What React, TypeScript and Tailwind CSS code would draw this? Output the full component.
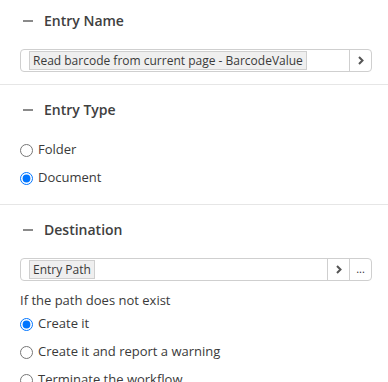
import { useState } from "react";

function Chevron() {
  return (
    <svg width="8" height="9" viewBox="0 0 8 9" fill="none">
      <path d="M2 1 L5.5 4.5 L2 8" stroke="#555" strokeWidth="2" />
    </svg>
  );
}

function Header({ title }: { title: string }) {
  return (
    <div className="flex items-center h-5 pl-[3px]">
      <span className="block w-[10px] h-[2px] bg-[#8a8a8a]" />
      <span className="ml-[11px] text-[14px] font-semibold text-[#404040] leading-5">{title}</span>
    </div>
  );
}

function Radio({ label, checked, onChange }: { label: string; checked: boolean; onChange: () => void }) {
  return (
    <label className="flex items-center h-7 cursor-pointer">
      <input
        type="radio"
        checked={checked}
        onChange={onChange}
        className="m-0 w-[13px] h-[13px] accent-[#0075ff]"
      />
      <span className="ml-[5px] text-[13px] text-[#3a3a3a]">{label}</span>
    </label>
  );
}

export default function App() {
  const [entryType, setEntryType] = useState("document");
  const [missing, setMissing] = useState("create");

  return (
    <div className="w-[388px] h-[382px] overflow-hidden bg-white font-['Open_Sans',sans-serif] text-[#3a3a3a]">
      {/* Entry Name */}
      <div className="px-5 pt-[11px] pb-[12px] border-b border-[#e6e6e6]">
        <Header title="Entry Name" />
        <div className="mt-[18px] flex h-[23px] w-[352px] border border-[#cfcfcf] rounded-[4px]">
          <div className="flex-1 flex items-center pl-2">
            <span className="h-[19px] flex items-center px-[3px] bg-[#efefef] border border-[#cfcfcf] text-[12px] leading-none whitespace-nowrap">
              Read barcode from current page - BarcodeValue
            </span>
          </div>
          <button className="w-[22px] flex items-center justify-center border-l border-[#cfcfcf]">
            <Chevron />
          </button>
        </div>
      </div>

      {/* Entry Type */}
      <div className="px-5 pt-[15px] pb-[12px] border-b border-[#e6e6e6]">
        <Header title="Entry Type" />
        <div className="mt-4">
          <Radio label="Folder" checked={entryType === "folder"} onChange={() => setEntryType("folder")} />
          <Radio label="Document" checked={entryType === "document"} onChange={() => setEntryType("document")} />
        </div>
      </div>

      {/* Destination */}
      <div className="px-5 pt-[15px]">
        <Header title="Destination" />
        <div className="mt-[18px] flex h-[23px] w-[352px] border border-[#cfcfcf] rounded-[4px]">
          <div className="flex-1 flex items-center pl-2">
            <span className="h-[19px] flex items-center px-[3px] bg-[#efefef] border border-[#cfcfcf] text-[12px] leading-none whitespace-nowrap">
              Entry Path
            </span>
          </div>
          <button className="w-[22px] flex items-center justify-center border-l border-[#cfcfcf]">
            <Chevron />
          </button>
          <button className="w-[22px] flex items-center justify-center border-l border-[#cfcfcf] text-[11px] leading-none text-[#333] pb-[3px]">
            ...
          </button>
        </div>
        <div className="mt-[10px] text-[13px] leading-[18px]">If the path does not exist</div>
        <div className="mt-[1px]">
          <Radio label="Create it" checked={missing === "create"} onChange={() => setMissing("create")} />
          <Radio label="Create it and report a warning" checked={missing === "warn"} onChange={() => setMissing("warn")} />
          <Radio label="Terminate the workflow" checked={missing === "stop"} onChange={() => setMissing("stop")} />
        </div>
      </div>
    </div>
  );
}
